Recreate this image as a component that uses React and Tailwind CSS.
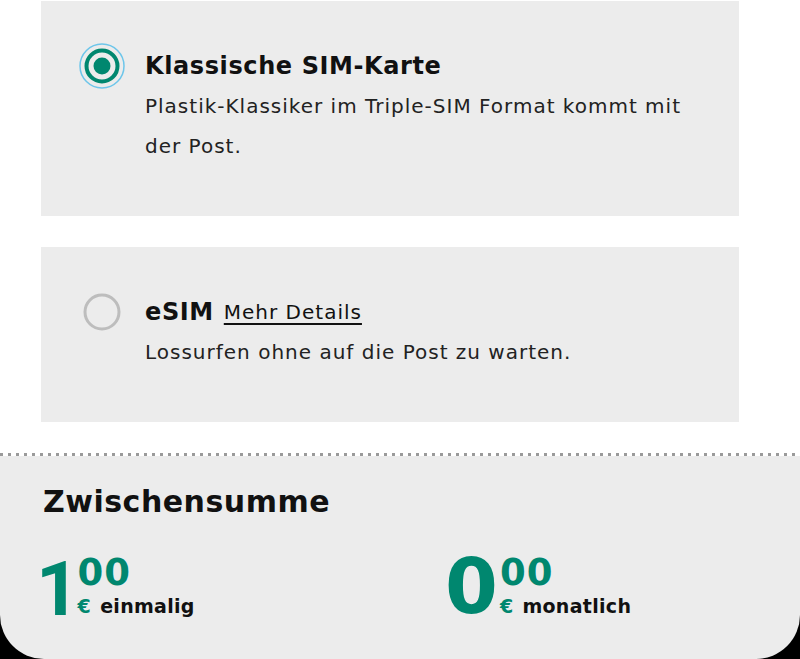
import React from "react";

const baseFont = { fontFamily: "'DejaVu Sans', 'Liberation Sans', sans-serif" };
const digitFont = { fontFamily: "Roboto, 'Open Sans', sans-serif" };

function RadioOn() {
  return (
    <svg width="46" height="46" viewBox="0 0 46 46" className="shrink-0">
      <circle cx="23" cy="23" r="22" fill="none" stroke="#6ec6ea" strokeWidth="1.5" />
      <circle cx="23" cy="23" r="15.5" fill="none" stroke="#00876f" strokeWidth="4" />
      <circle cx="23" cy="23" r="8.5" fill="#00876f" />
    </svg>
  );
}

function RadioOff() {
  return (
    <svg width="46" height="46" viewBox="0 0 46 46" className="shrink-0">
      <circle cx="23" cy="23" r="17" fill="none" stroke="#bdbdbd" strokeWidth="3" />
    </svg>
  );
}

function SimOption({ selected, title, link, desc }) {
  return (
    <div className="bg-[#ececec] pt-[45px] pb-[50px] pl-[38px] pr-[40px] flex gap-[20px]">
      <div className="h-[40px] flex items-center">
        {selected ? <RadioOn /> : <RadioOff />}
      </div>
      <div className="flex-1">
        <div className="h-[40px] flex items-center gap-[10px]">
          <span className="text-[24px] font-bold tracking-[0.6px] text-[#111]">{title}</span>
          {link && (
            <span className="text-[20px] tracking-[1px] underline underline-offset-[4px] text-[#111]">{link}</span>
          )}
        </div>
        <p className="text-[20px] tracking-[1px] leading-[40px] text-[#222]">{desc}</p>
      </div>
    </div>
  );
}

function Label({ label }) {
  return (
    <span className="text-[19px] leading-none font-bold tracking-[0.3px] text-[#111] mt-[6px]">
      <span className="text-[#00876f] mr-[9px]">€</span>
      {label}
    </span>
  );
}

function Cents() {
  return <span className="text-[37px] leading-none font-bold tracking-[1px] text-[#00876f]">00</span>;
}

export default function App() {
  return (
    <div style={baseFont} className="w-[800px] h-[659px] bg-white flex flex-col overflow-hidden">
      <div className="px-[41px] pt-[1px] flex flex-col gap-[31px] w-[780px]">
        <SimOption
          selected
          title="Klassische SIM-Karte"
          desc={
            <>
              Plastik-Klassiker im Triple-SIM Format kommt mit
              <br />
              der Post.
            </>
          }
        />
        <SimOption title="eSIM" link="Mehr Details" desc="Lossurfen ohne auf die Post zu warten." />
      </div>
      <div className="mt-[31px] flex-1 bg-black">
        <div className="h-full bg-[#ececec] rounded-b-[44px] flex flex-col">
          <div className="h-[3px] bg-[repeating-linear-gradient(90deg,#9a9a9a_0_3px,transparent_3px_8px)] bg-white" />
          <div className="px-[43px] pt-[31px]">
            <h2 className="text-[30px] font-bold tracking-[0.5px] text-[#111] leading-none">Zwischensumme</h2>
            <div className="flex mt-[32px]">
              <div className="w-[402px] flex items-start">
                <span style={digitFont} className="text-[76px] leading-none font-bold text-[#00876f] ml-[-7px] mt-[2px]">
                  1
                </span>
                <div className="flex flex-col mt-[5px] ml-[-2px]">
                  <Cents />
                  <Label label="einmalig" />
                </div>
              </div>
              <div className="flex items-start">
                <span className="text-[76px] leading-none font-bold text-[#00876f]">0</span>
                <div className="flex flex-col mt-[5px] ml-[2px]">
                  <Cents />
                  <Label label="monatlich" />
                </div>
              </div>
            </div>
          </div>
        </div>
      </div>
    </div>
  );
}
